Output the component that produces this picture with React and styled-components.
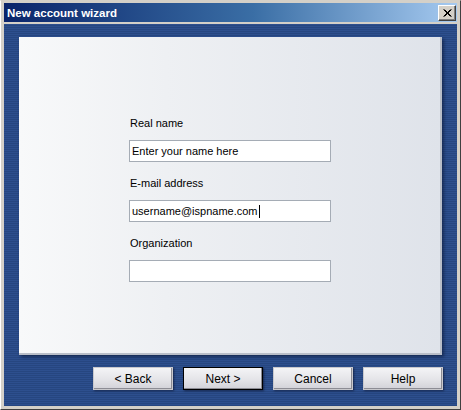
import React from 'react'
import styled, { createGlobalStyle } from 'styled-components'

const GlobalStyle = createGlobalStyle`
  body {
    margin: 0;
    background: #d4d0c8;
    font-family: Tahoma, "DejaVu Sans", "Liberation Sans", sans-serif;
  }
`

const Window = styled.div`
  width: 461px;
  height: 410px;
  box-sizing: border-box;
  background: #d4d0c8;
  border-top: 1px solid #d4d0c8;
  border-left: 1px solid #ffffff;
  border-right: 1px solid #404040;
  border-bottom: 1px solid #404040;
  padding: 2px 3px 3px 3px;
  display: flex;
  flex-direction: column;
`

const TitleBar = styled.div`
  height: 19px;
  display: flex;
  align-items: center;
  justify-content: space-between;
  padding: 0 1px 0 3px;
  background: linear-gradient(to right, #0a246a 0%, #3a6ea5 55%, #a6caf0 100%);
`

const Title = styled.span`
  color: #ffffff;
  font-family: "Liberation Sans", Arial, sans-serif;
  font-weight: bold;
  font-size: 11.5px;
`

const CloseButton = styled.div`
  width: 18px;
  height: 16px;
  box-sizing: border-box;
  background: #d4d0c8;
  border-top: 1px solid #ffffff;
  border-left: 1px solid #ffffff;
  border-right: 1px solid #404040;
  border-bottom: 1px solid #404040;
  box-shadow: inset -1px -1px 0 #808080;
  display: flex;
  align-items: center;
  justify-content: center;
`

const Body = styled.div`
  margin-top: 2px;
  flex: 1;
  display: flex;
  flex-direction: column;
  padding: 13px 15px 14px 15px;
  background: repeating-linear-gradient(
    to bottom,
    #2d4f8e 0px,
    #2d4f8e 1px,
    #264680 1px,
    #264680 2px
  );
`

const Panel = styled.div`
  height: 318px;
  box-sizing: border-box;
  background: linear-gradient(to right, #f8f9fa 0%, #eef0f3 35%, #dfe3ea 100%);
  border-right: 2px solid #b9bec8;
  border-bottom: 2px solid #b9bec8;
  box-shadow: 2px 2px 3px rgba(10, 20, 50, 0.55);
  padding: 80px 0 0 110px;
`

const Form = styled.div`
  display: flex;
  flex-direction: column;
  width: 202px;
`

const Label = styled.div`
  font-family: "Liberation Sans", Arial, sans-serif;
  font-size: 11px;
  color: #000;
  height: 14px;
  margin: 0 0 9px 1px;
`

const Field = styled.div`
  height: 22px;
  box-sizing: border-box;
  background: #ffffff;
  border: 1px solid #a5acb5;
  margin-bottom: 15px;
  display: flex;
  align-items: center;
  padding-left: 2px;
  font-family: "Liberation Sans", Arial, sans-serif;
  font-size: 11px;
  color: #000;
`

const Caret = styled.span`
  display: inline-block;
  width: 1px;
  height: 13px;
  background: #000;
  margin-left: 1px;
`

const ButtonRow = styled.div`
  margin-top: 12px;
  display: flex;
  justify-content: flex-end;
  gap: 10px;
  margin-right: -1px;
`

const Button = styled.div`
  width: 80px;
  height: 23px;
  box-sizing: border-box;
  display: flex;
  align-items: center;
  justify-content: center;
  font-family: "Liberation Sans", Arial, sans-serif;
  font-size: 12px;
  color: #000;
  background: linear-gradient(to bottom, #f4f4f6 0%, #e4e4e8 55%, #d2d2d8 100%);
  border: 1px solid ${(p) => (p.$default ? '#000000' : '#c8c8cc')};
  box-shadow: inset -1px -1px 0 #8c8c94, 1px 1px 2px rgba(0, 0, 20, 0.5);
`

const fields = [
  { label: 'Real name', value: 'Enter your name here' },
  { label: 'E-mail address', value: 'username@ispname.com', caret: true },
  { label: 'Organization', value: '' },
]

export default function App() {
  return (
    <>
      <GlobalStyle />
      <Window>
        <TitleBar>
          <Title>New account wizard</Title>
          <CloseButton>
            <svg width="9" height="8" viewBox="0 0 9 8">
              <path d="M0.5 0.5 L7.5 7.5 M1.5 0.5 L8.5 7.5 M7.5 0.5 L0.5 7.5 M8.5 0.5 L1.5 7.5" stroke="#000" strokeWidth="1" />
            </svg>
          </CloseButton>
        </TitleBar>
        <Body>
          <Panel>
            <Form>
              {fields.map((f) => (
                <React.Fragment key={f.label}>
                  <Label>{f.label}</Label>
                  <Field>
                    {f.value}
                    {f.caret && <Caret />}
                  </Field>
                </React.Fragment>
              ))}
            </Form>
          </Panel>
          <ButtonRow>
            <Button>&lt; Back</Button>
            <Button $default>Next &gt;</Button>
            <Button>Cancel</Button>
            <Button>Help</Button>
          </ButtonRow>
        </Body>
      </Window>
    </>
  )
}
